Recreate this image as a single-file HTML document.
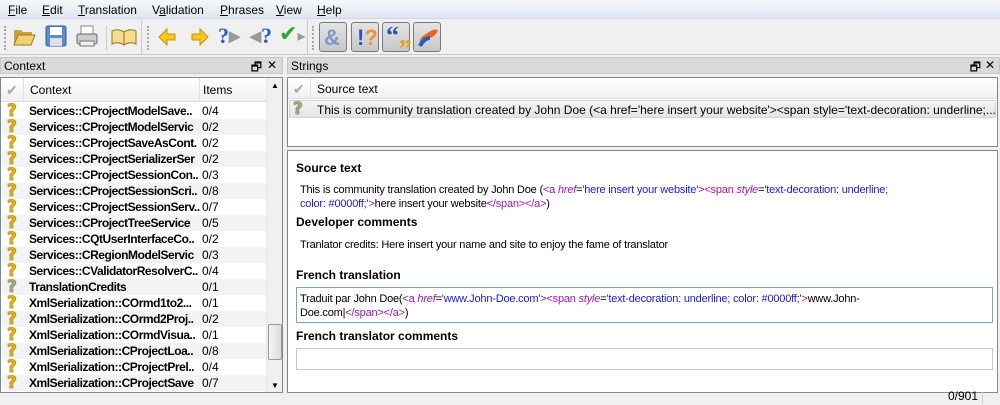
<!DOCTYPE html>
<html><head><meta charset="utf-8"><style>
*{margin:0;padding:0;box-sizing:border-box}
body{width:1000px;height:405px;background:#f0f0f0;font-family:"Liberation Sans",sans-serif;font-size:12px;color:#000;position:relative;overflow:hidden}
.a{position:absolute}
.menu{left:0;top:0;width:1000px;height:19px;background:linear-gradient(#f5f7fb,#dfe6f1);border-bottom:1px solid #d0d7e5}
.menu span{position:absolute;top:3px}
.tb{left:0;top:20px;width:1000px;height:35px;background:#f0f0f0;border-bottom:1px solid #c8c8c8}
.hdr{height:17px;background:#dadada;border:1px solid #c8c8c8;padding:1px 3px;font-size:12px}
.box{background:#fff;border:1px solid #828790}
.row{position:absolute;left:1px;width:264px;height:16px;font-weight:bold;font-size:12px}
.row .t{position:absolute;left:27px;top:1px;width:171px;overflow:hidden;white-space:nowrap;letter-spacing:-0.45px}
.row .n{position:absolute;left:200px;top:1px;font-weight:normal}
.q{position:absolute;left:5px;top:-2px;color:#e0b000;font-weight:bold;font-size:17px;font-family:"DejaVu Sans",sans-serif;text-shadow:0 0 1px #5a4000,0 0 1px #5a4000}
.alt{background:#f3f3f3}
.b{color:#1c1cd0}.p{color:#9a1ab0}
.tbx{position:absolute;border:1px solid #7a7a7a;border-radius:3px;background:linear-gradient(#e4e4e4,#c8c8c8);width:28px;height:30px;top:22px}
</style></head><body>
<div class="a menu">
<span style="left:8px"><u>F</u>ile</span><span style="left:42px"><u>E</u>dit</span><span style="left:78px"><u>T</u>ranslation</span><span style="left:152px">V<u>a</u>lidation</span><span style="left:220px"><u>P</u>hrases</span><span style="left:276px"><u>V</u>iew</span><span style="left:317px"><u>H</u>elp</span>
</div>
<div class="a tb">
<div class="a" style="left:4px;top:6px;width:2px;height:24px;border-left:2px dotted #aaa"></div>
<svg class="a" style="left:12px;top:4px" width="24" height="24"><path d="M2 6h7l2 2h9v3H6L2 20z" fill="#c9a040"/><path d="M6 11h17l-4 10H2z" fill="#f0d070" stroke="#a07820"/></svg>
<svg class="a" style="left:45px;top:5px" width="22" height="22"><rect x="1" y="1" width="20" height="20" rx="2" fill="#5c8ec8" stroke="#2a5a98"/><rect x="5" y="2" width="12" height="8" fill="#fff"/><rect x="5" y="13" width="12" height="8" fill="#dde"/></svg>
<svg class="a" style="left:75px;top:4px" width="24" height="24"><rect x="6" y="2" width="12" height="9" fill="#fff" stroke="#888"/><rect x="2" y="10" width="20" height="10" rx="2" fill="#ccc" stroke="#666"/><rect x="5" y="17" width="14" height="5" fill="#eee" stroke="#777"/></svg>
<div class="a" style="left:106px;top:6px;width:1px;height:24px;background:#ccc"></div>
<svg class="a" style="left:111px;top:5px" width="26" height="22"><path d="M1 6q6-3 12 1q6-4 12-1v13q-6-3-12 1q-6-4-12-1z" fill="#f4dc90" stroke="#9a7010"/><path d="M13 7v13" stroke="#9a7010"/></svg>
<div class="a" style="left:141px;top:0;width:1px;height:35px;background:#ccc"></div>
<div class="a" style="left:147px;top:6px;width:2px;height:24px;border-left:2px dotted #aaa"></div>
<svg class="a" style="left:157px;top:7px" width="20" height="20"><path d="M2 10l8-8v5h8v6h-8v5z" fill="#f8c820" stroke="#d09000"/></svg>
<svg class="a" style="left:190px;top:7px" width="20" height="20"><path d="M18 10l-8-8v5H2v6h8v5z" fill="#f8c820" stroke="#d09000"/></svg>
<div class="a" style="left:218px;top:3px;font:bold 22px 'Liberation Serif',serif;color:#2a60c8">?<span style="color:#999">▸</span></div>
<div class="a" style="left:250px;top:3px;font:bold 22px 'Liberation Serif',serif;color:#2a60c8"><span style="color:#999">◂</span>?</div>
<div class="a" style="left:279px;top:2px;font:bold 22px 'DejaVu Sans',sans-serif;color:#30a830">✔<span style="color:#999;font-size:16px">▸</span></div>
<div class="a" style="left:307px;top:0;width:1px;height:35px;background:#ccc"></div>
<div class="a" style="left:312px;top:6px;width:2px;height:24px;border-left:2px dotted #aaa"></div>
<div class="tbx" style="left:319px;top:2px"><span class="a" style="left:4px;top:2px;font:bold 22px 'Liberation Sans';color:#7c98c8">&amp;</span></div>
<div class="tbx" style="left:351px;top:2px"><span class="a" style="left:5px;top:2px;font:bold 22px 'Liberation Sans';color:#3050c0">!<span style="color:#f09030">?</span></span></div>
<div class="tbx" style="left:382px;top:2px"><span class="a" style="left:3px;top:-2px;font:bold 26px 'Liberation Serif';color:#3050c0">“<span style="color:#e0a020">„</span></span></div>
<div class="tbx" style="left:413px;top:2px"><svg class="a" style="left:2px;top:3px" width="24" height="24"><path d="M4 20q-2-8 6-12q8-6 12-4q-2 6-8 8q-4 4-10 8z" fill="#f06020"/><path d="M4 20q4-8 10-8" stroke="#2060c0" stroke-width="4" fill="none"/></svg></div>
</div>
<!-- Context -->
<div class="a hdr" style="left:0;top:57px;width:283px">Context<span class="a" style="right:20px;top:0">🗗</span><span class="a" style="right:5px;top:0">✕</span></div>
<div class="a box" style="left:0;top:77px;width:283px;height:316px;overflow:hidden">
<div class="a" style="left:0;top:0;width:265px;height:24px;background:linear-gradient(#fff,#f0f0f0);border-bottom:1px solid #ddd"></div>
<span class="a" style="left:5px;top:4px;color:#aaa;font-size:14px">✔</span>
<div class="a" style="left:22px;top:0;width:1px;height:24px;background:#e2e2e2"></div>
<span class="a" style="left:29px;top:5px">Context</span>
<div class="a" style="left:198px;top:0;width:1px;height:24px;background:#e2e2e2"></div>
<span class="a" style="left:202px;top:5px">Items</span>
<div class="a" style="left:265px;top:0;width:17px;height:316px;background:#f0f0f0;border-left:1px solid #e6e6e6"></div>
<span class="a" style="left:270px;top:3px;font-size:8px">▲</span>
<div class="a" style="left:267px;top:246px;width:14px;height:36px;border:1px solid #999;border-radius:2px;background:linear-gradient(90deg,#f4f4f4,#ddd)"></div>
<span class="a" style="left:270px;top:303px;font-size:8px">▼</span>
<div class="row" style="top:25px"><span class="q">?</span><span class="t">Services::CProjectModelSave..</span><span class="n">0/4</span></div>
<div class="row alt" style="top:41px"><span class="q">?</span><span class="t">Services::CProjectModelServic</span><span class="n">0/2</span></div>
<div class="row" style="top:57px"><span class="q">?</span><span class="t">Services::CProjectSaveAsCont.</span><span class="n">0/2</span></div>
<div class="row alt" style="top:73px"><span class="q">?</span><span class="t">Services::CProjectSerializerSer</span><span class="n">0/2</span></div>
<div class="row" style="top:89px"><span class="q">?</span><span class="t">Services::CProjectSessionCon..</span><span class="n">0/3</span></div>
<div class="row alt" style="top:105px"><span class="q">?</span><span class="t">Services::CProjectSessionScri..</span><span class="n">0/8</span></div>
<div class="row" style="top:121px"><span class="q">?</span><span class="t">Services::CProjectSessionServ..</span><span class="n">0/7</span></div>
<div class="row alt" style="top:137px"><span class="q">?</span><span class="t">Services::CProjectTreeService</span><span class="n">0/5</span></div>
<div class="row" style="top:153px"><span class="q">?</span><span class="t">Services::CQtUserInterfaceCo..</span><span class="n">0/2</span></div>
<div class="row alt" style="top:169px"><span class="q">?</span><span class="t">Services::CRegionModelServic</span><span class="n">0/3</span></div>
<div class="row" style="top:185px"><span class="q">?</span><span class="t">Services::CValidatorResolverC..</span><span class="n">0/4</span></div>
<div class="row alt" style="top:201px"><span class="q" style="color:#9aaa80">?</span><span class="t">TranslationCredits</span><span class="n">0/1</span></div>
<div class="row" style="top:217px"><span class="q">?</span><span class="t">XmlSerialization::COrmd1to2...</span><span class="n">0/1</span></div>
<div class="row alt" style="top:233px"><span class="q">?</span><span class="t">XmlSerialization::COrmd2Proj..</span><span class="n">0/2</span></div>
<div class="row" style="top:249px"><span class="q">?</span><span class="t">XmlSerialization::COrmdVisua..</span><span class="n">0/1</span></div>
<div class="row alt" style="top:265px"><span class="q">?</span><span class="t">XmlSerialization::CProjectLoa..</span><span class="n">0/8</span></div>
<div class="row" style="top:281px"><span class="q">?</span><span class="t">XmlSerialization::CProjectPrel..</span><span class="n">0/4</span></div>
<div class="row alt" style="top:297px"><span class="q">?</span><span class="t">XmlSerialization::CProjectSave</span><span class="n">0/7</span></div>
</div>
<!-- Strings -->
<div class="a hdr" style="left:287px;top:57px;width:713px">Strings<span class="a" style="right:18px;top:0">🗗</span><span class="a" style="right:4px;top:0">✕</span></div>
<div class="a box" style="left:287px;top:77px;width:711px;height:70px">
<div class="a" style="left:0;top:0;width:709px;height:21px;background:linear-gradient(#fff,#f0f0f0);border-bottom:1px solid #ddd"></div>
<span class="a" style="left:5px;top:3px;color:#aaa;font-size:14px">✔</span>
<div class="a" style="left:22px;top:0;width:1px;height:21px;background:#e2e2e2"></div>
<span class="a" style="left:29px;top:4px">Source text</span>
<div class="a" style="left:1px;top:22px;width:707px;height:18px;background:linear-gradient(#f4f4f4,#e4e4e4);border:1px solid #d4d4d4;border-radius:2px"></div>
<span class="q" style="left:5px;top:21px;color:#9aaa80">?</span>
<span class="a" style="left:29px;top:25px;white-space:nowrap">This is community translation created by John Doe (&lt;a href='here insert your website'&gt;&lt;span style='text-decoration: underline;...</span>
</div>
<div class="a box" style="left:287px;top:150px;width:711px;height:243px">
<b class="a" style="left:8px;top:10px">Source text</b>
<div class="a" style="left:12px;top:32px;font-size:11px;line-height:14px;letter-spacing:-0.2px">This is community translation created by John Doe (<span class="p">&lt;a</span> <i class="p">href</i>=<span class="b">'here insert your website'</span><span class="p">&gt;&lt;span</span> <i class="p">style</i>=<span class="b">'text-decoration: underline;<br>color: #0000ff;'</span><span class="p">&gt;</span>here insert your website<span class="p">&lt;/span&gt;&lt;/a&gt;</span>)</div>
<b class="a" style="left:8px;top:64px">Developer comments</b>
<div class="a" style="left:12px;top:88px;font-size:11px;letter-spacing:-0.2px">Tranlator credits: Here insert your name and site to enjoy the fame of translator</div>
<b class="a" style="left:8px;top:117px">French translation</b>
<div class="a" style="left:8px;top:136px;width:697px;height:36px;border:1px solid #7aa3cc;background:#fff"></div>
<div class="a" style="left:12px;top:141px;font-size:11px;line-height:14px;letter-spacing:-0.2px">Traduit par John Doe(<span class="p">&lt;a</span> <i class="p">href</i>=<span class="b">'www.John-Doe.com'</span><span class="p">&gt;&lt;span</span> <i class="p">style</i>=<span class="b">'text-decoration: underline; color: #0000ff;'</span><span class="p">&gt;</span>www.John-<br>Doe.com|<span class="p">&lt;/span&gt;&lt;/a&gt;</span>)</div>
<b class="a" style="left:8px;top:178px">French translator comments</b>
<div class="a" style="left:8px;top:197px;width:697px;height:22px;border:1px solid #c8c8c8;background:#fff"></div>
</div>
<span class="a" style="left:948px;top:389px">0/901</span>
<div class="a" style="left:982px;top:392px;width:1px;height:12px;background:#ccc"></div>
</body></html>
